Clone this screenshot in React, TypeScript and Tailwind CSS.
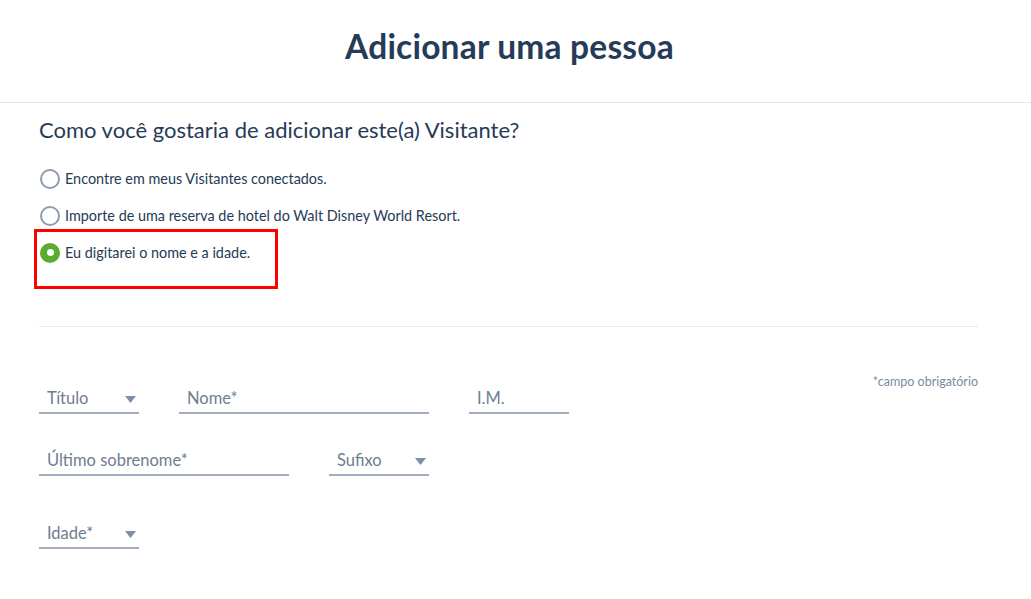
import React from 'react';

const font = { fontFamily: 'Lato, "Noto Sans", sans-serif' };

function Radio({ label, checked, children }: { label: string; checked?: boolean; children?: React.ReactNode }) {
  return (
    <div className="relative flex items-center h-[37px]">
      {checked ? (
        <span className="w-[20px] h-[20px] rounded-full bg-[#5aad2c] flex items-center justify-center">
          <span className="w-[7px] h-[7px] rounded-full bg-white" />
        </span>
      ) : (
        <span className="w-[20px] h-[20px] rounded-full border-2 border-[#8d9cb1] bg-white" />
      )}
      <span className="ml-[5px] text-[14.4px] text-[#253b56]">{label}</span>
      {children}
    </div>
  );
}

function Caret() {
  return (
    <svg width="11" height="7" viewBox="0 0 11 7" className="mt-[3px]">
      <path d="M0 0 H11 L5.5 7 Z" fill="#7f8ea6" />
    </svg>
  );
}

function Field({ label, width, select }: { label: string; width: string; select?: boolean }) {
  return (
    <div className={`${width} flex items-center justify-between border-b-2 border-[#a3afc0] pl-[8px] pr-[3px] pb-[4px]`}>
      <span className="text-[16.5px] text-[#6f7d90] leading-[20px]">{label}</span>
      {select && <Caret />}
    </div>
  );
}

export default function App() {
  return (
    <div className="w-[1031px] h-[599px] bg-white" style={font}>
      <div className="h-[103px] flex items-center justify-center border-b border-[#e3e8ee] pb-[10px] pr-[12px]">
        <h1 className="text-[33.5px] font-bold text-[#253b56] tracking-[0.2px]">Adicionar uma pessoa</h1>
      </div>
      <div className="pl-[39px] pr-[53px]">
        <h2 className="mt-[13px] text-[22px] text-[#253b56] leading-[28px]">
          Como você gostaria de adicionar este(a) Visitante?
        </h2>
        <div className="mt-[16px] pl-[1px]">
          <Radio label="Encontre em meus Visitantes conectados." />
          <Radio label="Importe de uma reserva de hotel do Walt Disney World Resort." />
          <Radio label="Eu digitarei o nome e a idade." checked>
            <div className="absolute left-[-6px] top-[-5px] w-[244px] h-[60px] border-[3px] border-[#ff0000]" />
          </Radio>
        </div>
        <div className="mt-[55px] border-t border-[#e6eaef]" />
        <div className="mt-[48px] flex justify-end">
          <span className="text-[12.5px] text-[#7a8aa2] leading-[14px]">*campo obrigatório</span>
        </div>
        <div className="mt-[-1px] flex gap-[40px]">
          <Field label="Título" width="w-[100px]" select />
          <Field label="Nome*" width="w-[250px]" />
          <Field label="I.M." width="w-[100px]" />
        </div>
        <div className="mt-[36px] flex gap-[40px]">
          <Field label="Último sobrenome*" width="w-[250px]" />
          <Field label="Sufixo" width="w-[100px]" select />
        </div>
        <div className="mt-[47px] flex gap-[40px]">
          <Field label="Idade*" width="w-[100px]" select />
        </div>
      </div>
    </div>
  );
}
